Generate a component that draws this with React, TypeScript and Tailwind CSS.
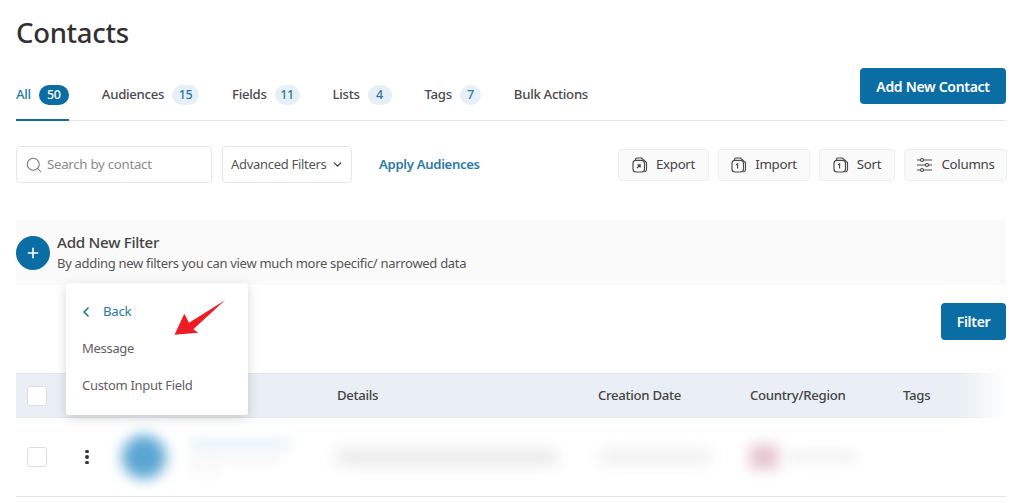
import { ChevronDown, ChevronLeft, Plus, Search } from 'lucide-react';

const font = { fontFamily: '"Noto Sans", sans-serif' };

const tabs = [
    { label: 'All', count: '50', active: true, badge: 'w-[30px]' },
    { label: 'Audiences', count: '15', badge: 'w-[27px]' },
    { label: 'Fields', count: '11', badge: 'w-[25px]' },
    { label: 'Lists', count: '4', badge: 'w-[24px]' },
    { label: 'Tags', count: '7', badge: 'w-[21px]' },
    { label: 'Bulk Actions' },
];

// document icon used on export/import/sort, the inner mark differs
function DocIcon({ mark }: { mark: string }) {
    return (
        <svg width="16" height="16" viewBox="0 0 16 16" fill="none" stroke="#484848" strokeWidth="1.15">
            <path d="M3.5 3V2.4A1.4 1.4 0 0 1 4.9 1H9.5l5 4.6v7a2.4 2.4 0 0 1-2 2.3" />
            <rect x="1" y="3.4" width="11.5" height="11.6" rx="3" />
            <path d={mark} />
        </svg>
    );
}

function ColumnsIcon() {
    return (
        <svg width="17" height="16" viewBox="0 0 17 16" fill="none" stroke="#484848" strokeWidth="1.1">
            <path d="M1 3h3.5M7.5 3H16M1 8h8.5M12.5 8H16M1 13h3.5M7.5 13H16" />
            <circle cx="6" cy="3" r="1.5" />
            <circle cx="11" cy="8" r="1.5" />
            <circle cx="6" cy="13" r="1.5" />
        </svg>
    );
}

function ToolButton({ label, width, icon }: { label: string; width: string; icon: React.ReactNode }) {
    return (
        <button className={`${width} h-[32px] flex items-center justify-center gap-[8px] rounded border border-[#eeeeee] bg-[#fafafa] text-[13.3px] text-[#444444]`}>
            {icon}
            {label}
        </button>
    );
}

function Tab({ label, count, active, badge }: { label: string; count?: string; active?: boolean; badge?: string }) {
    return (
        <div className={`h-[52px] pt-[2px] flex items-center gap-[8px] border-b-2 ${active ? 'border-[#0f6fa3] text-[#2b79a8]' : 'border-transparent text-[#4a4a4a]'}`}>
            <span className="text-[13.2px] font-medium">{label}</span>
            {count && (
                <span className={`${badge} h-[20px] flex items-center justify-center rounded-full text-[12.5px] font-medium ${active ? 'bg-[#0a6ea4] text-white' : 'bg-[#e6f0f6] text-[#2b79a8]'}`}>
                    {count}
                </span>
            )}
        </div>
    );
}

export default function App() {
    return (
        <div style={font} className="relative w-[1024px] h-[503px] overflow-hidden bg-white pl-[16px] pr-[18px] tracking-[-0.3px]">
            {/* Title */}
            <h1 className="pt-[13px] h-[44px] text-[27.5px] leading-[40px] font-medium text-[#333030]">Contacts</h1>

            {/* Tabs */}
            <div className="mt-[12px] h-[65px] flex items-end border-b border-[#e3e5e7]">
                <div className="flex gap-[33px] -mb-px">
                    {tabs.map((t) => (
                        <Tab key={t.label} {...t} />
                    ))}
                </div>
                <button className="ml-auto mb-[16px] w-[146px] h-[36px] rounded bg-[#0a6ea4] text-white text-[14px] font-semibold">
                    Add New Contact
                </button>
            </div>

            {/* Toolbar */}
            <div className="mt-[25px] h-[37px] flex items-center">
                <div className="w-[196px] h-[37px] flex items-center gap-[4px] pl-[8px] rounded border border-[#e6e6e6] text-[13.3px] text-[#8a8a8a]">
                    <Search size={18} strokeWidth={1.4} className="text-[#777777]" />
                    Search by contact
                </div>
                <div className="ml-[10px] w-[130px] h-[37px] flex items-center justify-between pl-[8px] pr-[7px] rounded border border-[#e6e6e6] text-[13px] text-[#555555] whitespace-nowrap">
                    Advanced Filters
                    <ChevronDown size={13} strokeWidth={2.2} className="text-[#333333]" />
                </div>
                <span className="ml-[27px] text-[13.1px] font-semibold text-[#2b79a8]">Apply Audiences</span>
                <div className="ml-auto -mr-[1px] flex gap-[9px]">
                    <ToolButton label="Export" width="w-[91px]" icon={<DocIcon mark="M5 11l3-3M5.5 7.8H8.2v2.7" />} />
                    <ToolButton label="Import" width="w-[92px]" icon={<DocIcon mark="M5 8l1.6-1.2V11.5" />} />
                    <ToolButton label="Sort" width="w-[76px]" icon={<DocIcon mark="M5 8l1.6-1.2V11.5" />} />
                    <ToolButton label="Columns" width="w-[103px]" icon={<ColumnsIcon />} />
                </div>
            </div>

            {/* Add filter panel */}
            <div className="mt-[37px] h-[65px] flex items-center gap-[7px] bg-[#fafafa]">
                <div className="w-[34px] h-[34px] flex items-center justify-center rounded-full bg-[#0a6ea4]">
                    <Plus size={16} strokeWidth={2.4} className="text-white" />
                </div>
                <div>
                    <p className="text-[15.2px] leading-[21px] font-medium text-[#444444]">Add New Filter</p>
                    <p className="text-[13px] leading-[21px] text-[#555555]">
                        By adding new filters you can view much more specific/ narrowed data
                    </p>
                </div>
            </div>

            <div className="mt-[18px] flex justify-end">
                <button className="w-[65px] h-[37px] rounded bg-[#0a6ea4] text-white text-[14px] font-semibold">Filter</button>
            </div>

            {/* Table */}
            <div className="relative mt-[33px]">
                <div className="h-[45px] flex items-center bg-[#e9eff4] border-y border-[#e1e6ea] text-[13.2px] font-medium text-[#444444]">
                    <div className="w-[321px] pl-[11px]">
                        <div className="w-[20px] h-[20px] rounded-[3px] border border-[#dddddd] bg-white" />
                    </div>
                    <span className="w-[261px]">Details</span>
                    <span className="w-[152px]">Creation Date</span>
                    <span className="w-[153px]">Country/Region</span>
                    <span>Tags</span>
                    <div className="absolute right-0 top-0 w-[50px] h-[45px] bg-gradient-to-r from-transparent to-white" />
                </div>
                <div className="h-[79px] flex items-center border-b border-[#e3e5e7]">
                    <div className="w-[60px] pl-[11px]">
                        <div className="w-[20px] h-[20px] rounded-[3px] border border-[#dddddd]" />
                    </div>
                    <div className="w-[22px] flex flex-col items-center gap-[2px]">
                        <span className="w-[3.5px] h-[3.5px] rounded-full bg-[#333333]" />
                        <span className="w-[3.5px] h-[3.5px] rounded-full bg-[#333333]" />
                        <span className="w-[3.5px] h-[3.5px] rounded-full bg-[#333333]" />
                    </div>
                    <div className="ml-[24px] w-[44px] h-[44px] rounded-full bg-[#5aa6d2] blur-[7px]" />
                    <div className="ml-[24px] w-[100px] flex flex-col gap-[8px] blur-[6px]">
                        <div className="w-[100px] h-[6px] bg-[#d9e8f2]" />
                        <div className="w-[90px] h-[6px] bg-[#f0f0f0]" />
                        <div className="w-[30px] h-[5px] bg-[#f3f3f3]" />
                    </div>
                    <div className="ml-[47px] w-[220px] h-[12px] bg-[#e2e2e2] blur-[8px]" />
                    <div className="ml-[43px] w-[110px] h-[10px] bg-[#e8e8e8] blur-[8px]" />
                    <div className="ml-[40px] w-[28px] h-[24px] bg-[#e6c4cf] blur-[7px]" />
                    <div className="ml-[8px] w-[70px] h-[8px] bg-[#ebebeb] blur-[7px]" />
                </div>
            </div>

            {/* Popover */}
            <div className="absolute left-[66px] top-[283px] w-[182px] h-[132px] rounded-[3px] bg-white pl-[16px] shadow-[0_3px_12px_rgba(0,0,0,0.16)] text-[13px] text-[#5f5f5f]">
                <div className="h-[58px] flex items-center gap-[9px] text-[13.3px] text-[#2b79a8]">
                    <ChevronLeft size={16} strokeWidth={2.6} className="text-[#1f78a8] -ml-[4px]" />
                    Back
                </div>
                <p className="leading-[18px] -mt-[2px]">Message</p>
                <p className="leading-[18px] mt-[19px]">Custom Input Field</p>
            </div>

            {/* Red arrow annotation */}
            <svg className="absolute left-[174px] top-[299px]" width="53" height="37" viewBox="0 0 53 37">
                <path d="M0.5 35.7 L10.3 14.7 L15 23.7 L51 1.3 L19.3 30.3 L24.3 33.7 Z" fill="#ee1c25" />
            </svg>
        </div>
    );
}
